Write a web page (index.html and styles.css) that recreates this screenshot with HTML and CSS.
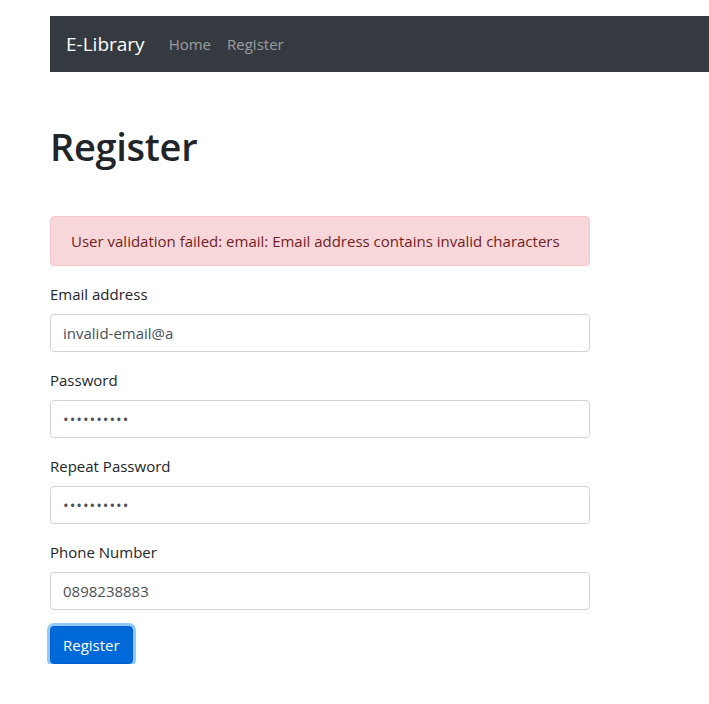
FILE: index.html
```html
<!DOCTYPE html>
<html lang="en">
<head>
<meta charset="utf-8">
<title>Register</title>
<link rel="stylesheet" href="styles.css">
</head>
<body>
<nav class="navbar">
  <a class="brand" href="#">E-Library</a>
  <a class="nav-link" href="#">Home</a>
  <a class="nav-link" href="#">Register</a>
</nav>
<main class="main">
  <h1 class="title">Register</h1>
  <div class="alert">User validation failed: email: Email address contains invalid characters</div>
  <form class="form">
    <div class="group">
      <label class="label" for="email">Email address</label>
      <input class="input" id="email" type="text" value="invalid-email@a">
    </div>
    <div class="group">
      <label class="label" for="pw">Password</label>
      <input class="input input-pw" id="pw" type="password" value="1234567890">
    </div>
    <div class="group">
      <label class="label" for="pw2">Repeat Password</label>
      <input class="input input-pw" id="pw2" type="password" value="1234567890">
    </div>
    <div class="group">
      <label class="label" for="phone">Phone Number</label>
      <input class="input" id="phone" type="text" value="0898238883">
    </div>
    <button class="btn" type="button">Register</button>
  </form>
</main>
</body>
</html>
```
FILE: styles.css
```css
* { box-sizing: border-box; }
body {
  margin: 0;
  font-family: "Open Sans", "Noto Sans", sans-serif;
  font-size: 15px;
  line-height: 24px;
  color: #212529;
  background: #fff;
}
.navbar {
  margin: 16px 0 0 50px;
  height: 56px;
  padding: 8px 16px;
  background: #343a40;
  display: flex;
  align-items: center;
}
.brand {
  color: #fff;
  font-size: 19px;
  text-decoration: none;
  margin-right: 16px;
}
.nav-link {
  color: rgba(255,255,255,.5);
  text-decoration: none;
  padding: 0 8px;
}
.main {
  margin-left: 50px;
  width: 540px;
}
.title {
  font-size: 38px;
  font-weight: 600;
  line-height: 48px;
  margin: 50px 0 46px;
  letter-spacing: -0.3px;
}
.alert {
  background: #f8d7da;
  border: 1px solid #f5c6cb;
  color: #721c24;
  border-radius: 4px;
  padding: 12px 20px;
  margin-bottom: 16px;
}
.group { margin-bottom: 16px; }
.label {
  display: block;
  margin-bottom: 8px;
}
.input {
  display: block;
  width: 100%;
  height: 38px;
  padding: 6px 12px;
  font: inherit;
  color: #495057;
  border: 1px solid #ced4da;
  border-radius: 4px;
  background: #fff;
}
.input-pw {
  letter-spacing: 1px;
}
.btn {
  font: inherit;
  color: #fff;
  background: #0069d9;
  border: 1px solid #0062cc;
  border-radius: 4px;
  padding: 6px 12px;
  box-shadow: 0 0 0 3px rgba(38,143,255,.5);
}
```
